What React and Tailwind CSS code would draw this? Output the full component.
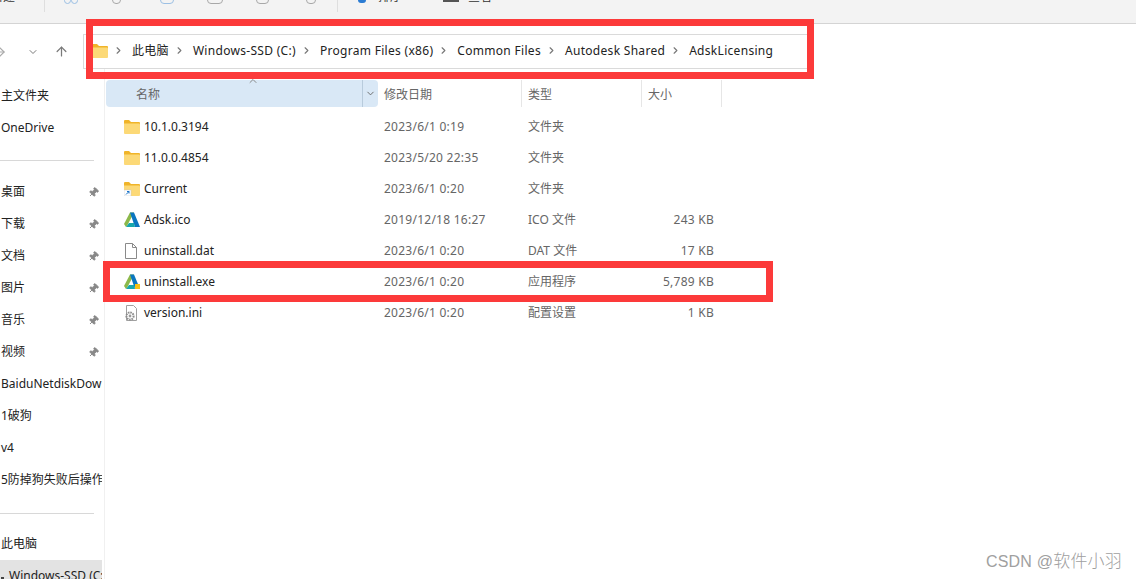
import { ArrowUp, ArrowRight, ChevronDown, ChevronRight, ChevronUp, Pin } from 'lucide-react'

const font = '[font-family:"Noto_Sans","Noto_Sans_CJK_SC",sans-serif]'

const crumbs = ['此电脑', 'Windows-SSD (C:)', 'Program Files (x86)', 'Common Files', 'Autodesk Shared', 'AdskLicensing']

const files = [
  { name: '10.1.0.3194', date: '2023/6/1 0:19', type: '文件夹', size: '', icon: 'folder' },
  { name: '11.0.0.4854', date: '2023/5/20 22:35', type: '文件夹', size: '', icon: 'folder' },
  { name: 'Current', date: '2023/6/1 0:20', type: '文件夹', size: '', icon: 'link' },
  { name: 'Adsk.ico', date: '2019/12/18 16:27', type: 'ICO 文件', size: '243 KB', icon: 'adsk' },
  { name: 'uninstall.dat', date: '2023/6/1 0:20', type: 'DAT 文件', size: '17 KB', icon: 'doc' },
  { name: 'uninstall.exe', date: '2023/6/1 0:20', type: '应用程序', size: '5,789 KB', icon: 'exe' },
  { name: 'version.ini', date: '2023/6/1 0:20', type: '配置设置', size: '1 KB', icon: 'ini' },
]

const quick = ['桌面', '下载', '文档', '图片', '音乐', '视频']
const others = ['BaiduNetdiskDownload', '1破狗', 'v4', '5防掉狗失败后操作']

function FolderIcon({ link, className = '' }) {
  return (
    <svg width="16" height="14" viewBox="0 0 16 14" className={className}>
      <path d="M0 1a1 1 0 0 1 1-1h4l2 2h8a1 1 0 0 1 1 1v2H0z" fill="#f0b429" />
      <path d="M0 3.5h15a1 1 0 0 1 1 1V13a1 1 0 0 1-1 1H1a1 1 0 0 1-1-1z" fill="#fcd977" />
      {link && <rect x="0" y="8" width="7" height="6" fill="#fff" stroke="#c8c8c8" strokeWidth="0.5" />}
      {link && <path d="M2 12.5 5 9.5M3 9.5h2v2" stroke="#1a73c8" strokeWidth="1" fill="none" />}
    </svg>
  )
}

function AdskIcon({ exe }) {
  return (
    <svg width="16" height="16" viewBox="0 0 16 16">
      <path d="M0 12 6 .5h4L3.5 13 2 15z" fill="#8cb84a" />
      <path d="M6 .5h4L16 15h-5z" fill="#0a76c0" />
      <path d="M2 15l3-4h5l1 4z" fill="#17a7ad" />
      {exe && <rect x="11" y="10" width="5" height="5" fill="#f5c116" />}
    </svg>
  )
}

function DocIcon() {
  return (
    <svg width="14" height="16" viewBox="0 0 14 16">
      <path d="M1.5.5h7l4 4v11h-11z" fill="#fff" stroke="#8a8a8a" />
      <path d="M8.5.5v4h4" fill="none" stroke="#8a8a8a" />
    </svg>
  )
}

function IniIcon() {
  return (
    <svg width="14" height="16" viewBox="0 0 14 16">
      <path d="M2.5.5h7l3 3v12h-10z" fill="#fff" stroke="#a0a0a0" />
      <circle cx="6" cy="11" r="3.6" fill="none" stroke="#8c8c8c" strokeWidth="2" strokeDasharray="1.6 0.8" />
      <circle cx="6" cy="11" r="1.4" fill="#9a9a9a" />
    </svg>
  )
}

function FileIcon({ icon }) {
  if (icon === 'folder') return <FolderIcon />
  if (icon === 'link') return <FolderIcon link />
  if (icon === 'adsk') return <AdskIcon />
  if (icon === 'exe') return <AdskIcon exe />
  if (icon === 'doc') return <DocIcon />
  return <IniIcon />
}

function Toolbar() {
  return (
    <div className="h-6 shrink-0 bg-[#f3f3f3] border-b border-[#d4d4d4] flex items-start overflow-hidden">
      <div className="w-[44px] -mt-[12px] text-[12px] text-[#333] overflow-hidden whitespace-nowrap">
        <span className="-ml-[9px] block">新建</span>
      </div>
      <div className="w-px h-[12px] bg-[#dedede]" />
      <div className="flex items-start -mt-[10px]">
        <div className="ml-[19px] flex">
          <div className="w-[7px] h-[14px] rounded-full border border-[#9cc0e4]" />
          <div className="w-[7px] h-[14px] rounded-full border border-[#9cc0e4]" />
        </div>
        <div className="ml-[34px] w-[9px] h-[14px] rounded border border-[#a8a8a8]" />
        <div className="ml-[39px] w-[14px] h-[14px] rounded-sm border border-[#9cc0e4]" />
        <div className="ml-[33px] w-[16px] h-[14px] rounded-sm border border-[#a8a8a8]" />
        <div className="ml-[33px] w-[13px] h-[14px] rounded border border-[#a8a8a8]" />
        <div className="ml-[37px] w-[10px] h-[14px] rounded border border-[#a8a8a8]" />
      </div>
      <div className="w-px h-[12px] bg-[#dedede] ml-[21px]" />
      <div className="flex items-start text-[12px] text-[#333]">
        <div className="ml-[20px] w-[8px] h-[3px] bg-[#2b7cd3] rounded-b-sm" />
        <span className="ml-[12px] -mt-[12px]">排序</span>
        <div className="ml-[41px] w-[16px] h-[2px] bg-[#555]" />
        <span className="ml-[9px] -mt-[12px]">查看</span>
      </div>
    </div>
  )
}

function NavBar() {
  return (
    <div className="h-[45px] shrink-0 flex items-center pt-[10px]">
      <div className="w-[83px] flex items-center text-[#7a7a7a] shrink-0">
        <ArrowRight size={14} className="-ml-[7px] text-[#aaa]" />
        <ChevronDown size={12} className="ml-[20px]" />
        <ArrowUp size={15} className="ml-[15px]" />
      </div>
      <div className="w-[727px] h-[35px] border border-[#dadada] flex items-center pl-[8px] pb-[2px] text-[12px] text-[#222] whitespace-nowrap tracking-[0.3px]">
        <FolderIcon />
        {crumbs.map((c) => (
          <span key={c} className="flex items-center">
            <ChevronRight size={11} strokeWidth={2.5} className="ml-[5px] mr-[8px] text-[#777]" />
            {c}
          </span>
        ))}
      </div>
    </div>
  )
}

function SideItem({ label, pin }) {
  return (
    <div className="h-8 shrink-0 flex items-center pl-px text-[12px] text-[#222] relative overflow-hidden whitespace-nowrap">
      <span>{label}</span>
      {pin && <Pin size={11} className="absolute right-[3px] top-[11px] rotate-45 text-[#888] fill-[#888]" />}
    </div>
  )
}

function Sidebar() {
  return (
    <div className="w-[105px] shrink-0 border-r border-[#f0f0f0] pt-[11px] pr-[2px] flex flex-col overflow-hidden">
      <SideItem label="主文件夹" />
      <SideItem label="OneDrive" />
      <div className="h-px shrink-0 bg-[#d8d8d8] w-[94px] mt-[16px] mb-[15px]" />
      {quick.map((q) => <SideItem key={q} label={q} pin />)}
      {others.map((q) => <SideItem key={q} label={q} />)}
      <div className="h-px shrink-0 bg-[#d8d8d8] w-[94px] mt-[17px] mb-[14px]" />
      <SideItem label="此电脑" />
      <div className="h-[19px] shrink-0 bg-[#e3e3e3] flex items-start pl-[9px] pt-[7px] text-[12px] text-[#222] whitespace-nowrap overflow-hidden relative">
        <div className="absolute left-[1px] bottom-0 w-[3px] h-[2px] bg-[#444]" />
        Windows-SSD (C:)
      </div>
    </div>
  )
}

function HeaderCell({ label, className }) {
  return (
    <div className={`h-full flex items-center pt-[2px] border-r border-[#e6e6e6] text-[#666] ${className}`}>{label}</div>
  )
}

function FileList() {
  return (
    <div className="flex-1 pl-px">
      <div className="h-[27px] flex text-[12px] mt-[11px] mb-[4px]">
        <div className="w-[272px] h-full bg-[#d9e8f6] rounded-sm flex items-center pl-[30px] pt-[2px] text-[#666] relative">
          名称
          <ChevronUp size={12} className="absolute left-[141px] -top-[5px] text-[#888]" />
          <div className="absolute right-0 top-0 h-full w-[16px] border-l border-[#b8cbdc] flex items-center justify-center">
            <ChevronDown size={11} className="text-[#666]" />
          </div>
        </div>
        <HeaderCell label="修改日期" className="w-[144px] pl-[6px]" />
        <HeaderCell label="类型" className="w-[120px] pl-[6px]" />
        <HeaderCell label="大小" className="w-[80px] pl-[6px]" />
      </div>
      {files.map((f) => (
        <div key={f.name} className="h-[31px] flex items-center text-[12px]">
          <div className="w-[18px]" />
          <div className="w-[20px] flex items-center"><FileIcon icon={f.icon} /></div>
          <div className="w-[240px] text-[#222]">{f.name}</div>
          <div className="w-[144px] text-[#666] tracking-[0.25px]">{f.date}</div>
          <div className="w-[100px] text-[#666]">{f.type}</div>
          <div className="w-[86px] text-right text-[#666] tracking-[0.25px]">{f.size}</div>
        </div>
      ))}
    </div>
  )
}

export default function App() {
  return (
    <div className={`w-[1136px] h-[579px] bg-white relative overflow-hidden flex flex-col ${font}`}>
      <Toolbar />
      <NavBar />
      <div className="flex flex-1 min-h-0">
        <Sidebar />
        <FileList />
      </div>

      {/* red annotation boxes */}
      <div className="absolute left-[86px] top-[19px] w-[728px] h-[60px] border-[7px] border-[#fc3a3a]" />
      <div className="absolute left-[103px] top-[261px] w-[670px] h-[41px] border-[7px] border-[#fc3a3a]" />

      <div className="absolute right-[14px] bottom-[5px] text-[16px] tracking-[0.2px] text-[#a0a0a0] [font-family:'Liberation_Sans','Noto_Sans_CJK_SC',sans-serif] font-light">
        CSDN @<span className="text-[17px]">软件小羽</span>
      </div>
    </div>
  )
}
